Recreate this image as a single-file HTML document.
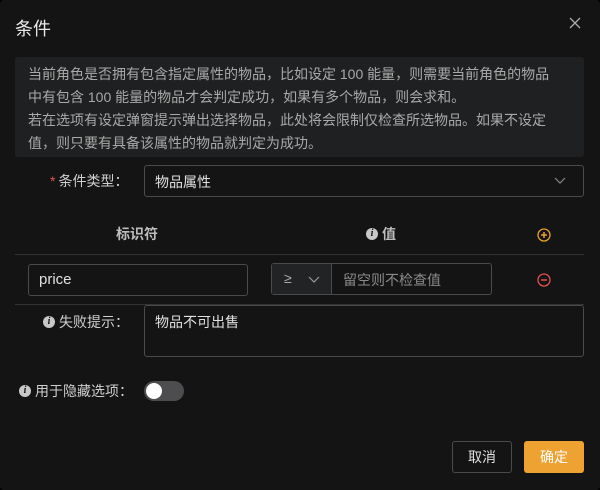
<!DOCTYPE html>
<html><head><meta charset="utf-8"><style>
*{box-sizing:border-box;margin:0;padding:0}
body{width:600px;height:490px;background:#000;font-family:"Liberation Sans","Noto Sans CJK SC",sans-serif;overflow:hidden;position:relative}
.dlg{position:absolute;left:0;top:0;width:600px;height:490px;background:#141414;border-radius:4px}
.a{position:absolute}
.title{left:15px;top:15px;font-size:18px;color:#e8e8e8}
.info{left:15px;top:57px;width:569px;height:100px;background:#1f2021;border-radius:3px;padding:6px 13px;font-size:14px;line-height:23px;color:#a9a9a9;white-space:nowrap}
.lbl{font-size:14px;color:#cfcfcf;display:flex;align-items:center;line-height:20px}
.box{border:1px solid #4a4a4a;border-radius:3px}
.ic{display:inline-block;width:12px;height:12px;border-radius:50%;background:#c8c8c8;color:#141414;font:italic bold 10px/12px "Liberation Serif",serif;text-align:center;margin-right:4px}
.btn{font-size:14px;text-align:center;line-height:30px;border-radius:3px}
</style></head><body><div class="dlg">
<div class="a title">条件</div>
<svg class="a" style="left:569px;top:17px" width="12" height="12"><path d="M1 1L11 11M11 1L1 11" stroke="#aaa" stroke-width="1.3"/></svg>
<div class="a info">当前角色是否拥有包含指定属性的物品，比如设定 100 能量，则需要当前角色的物品<br>中有包含 100 能量的物品才会判定成功，如果有多个物品，则会求和。<br>若在选项有设定弹窗提示弹出选择物品，此处将会限制仅检查所选物品。如果不设定<br>值，则只要有具备该属性的物品就判定为成功。</div>
<div class="a lbl" style="left:50px;top:171px"><span style="color:#e0534f;margin-right:3px">*</span>条件类型：</div>
<div class="a box" style="left:144px;top:165px;width:440px;height:32px;font-size:14px;color:#e0e0e0;padding:6px 10px">物品属性</div>
<svg class="a" style="left:554px;top:177px" width="12" height="8"><path d="M1 1L6 6L11 1" stroke="#888" fill="none" stroke-width="1.2"/></svg>
<div class="a lbl" style="left:116px;top:224px;font-weight:bold;color:#bdbdbd">标识符</div>
<div class="a lbl" style="left:366px;top:224px;font-weight:bold;color:#bdbdbd"><span class="ic">i</span>值</div>
<svg class="a" style="left:537px;top:228px" width="14" height="14"><circle cx="7" cy="7" r="6" stroke="#e8a22c" fill="none" stroke-width="1.3"/><path d="M4 7H10M7 4V10" stroke="#e8a22c" stroke-width="1.5"/></svg>
<div class="a" style="left:15px;top:254px;width:569px;height:1px;background:#333"></div>
<div class="a box" style="left:28px;top:264px;width:220px;height:32px;font-size:15px;color:#e0e0e0;padding:6px 10px">price</div>
<div class="a box" style="left:271px;top:263px;width:221px;height:32px"></div>
<div class="a" style="left:272px;top:264px;width:60px;height:30px;background:#222324;border-right:1px solid #4a4a4a;color:#aaa;font-size:14px;padding:6px 12px">≥</div>
<svg class="a" style="left:308px;top:276px" width="12" height="7"><path d="M1 1L6 6L11 1" stroke="#999" fill="none" stroke-width="1.2"/></svg>
<div class="a" style="left:343px;top:270px;font-size:14px;color:#8a8a8a">留空则不检查值</div>
<svg class="a" style="left:537px;top:273px" width="14" height="14"><circle cx="7" cy="7" r="6" stroke="#e0534f" fill="none" stroke-width="1.3"/><path d="M4 7H10" stroke="#e0534f" stroke-width="1.5"/></svg>
<div class="a" style="left:15px;top:304px;width:569px;height:1px;background:#333"></div>
<div class="a lbl" style="left:43px;top:312px"><span class="ic">i</span>失败提示：</div>
<div class="a box" style="left:144px;top:305px;width:440px;height:52px;font-size:14px;color:#e0e0e0;padding:6px 10px">物品不可出售</div>
<div class="a lbl" style="left:19px;top:381px"><span class="ic">i</span>用于隐藏选项：</div>
<div class="a" style="left:144px;top:381px;width:40px;height:20px;border-radius:10px;background:#4d4d4f"></div>
<div class="a" style="left:146px;top:383px;width:16px;height:16px;border-radius:50%;background:#fff"></div>
<div class="a btn box" style="left:452px;top:441px;width:60px;height:32px;color:#e0e0e0">取消</div>
<div class="a btn" style="left:524px;top:441px;width:60px;height:32px;background:#eea231;color:#fff;line-height:32px">确定</div>
</div></body></html>
